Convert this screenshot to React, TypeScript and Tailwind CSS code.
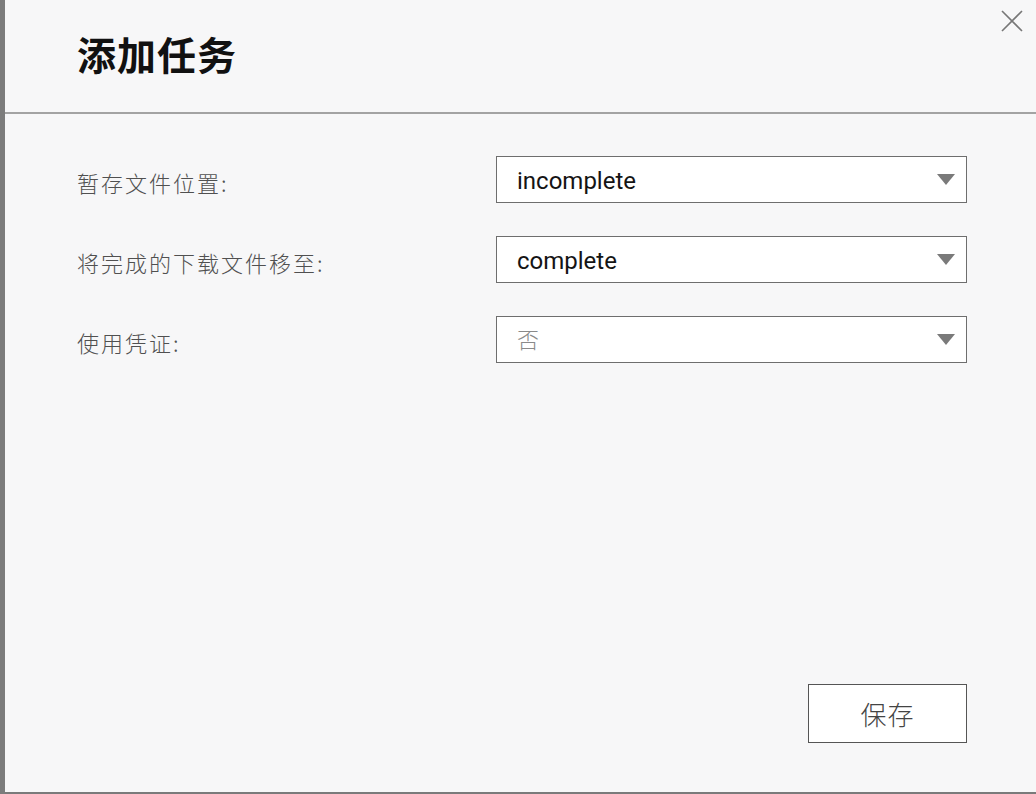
const font = "font-['Roboto','Noto_Sans_CJK_SC',sans-serif]";

const rows = [
  { label: "暂存文件位置:", value: "incomplete", muted: false },
  { label: "将完成的下载文件移至:", value: "complete", muted: false },
  { label: "使用凭证:", value: "否", muted: true },
];

function Caret() {
  return (
    <svg width="18" height="11" viewBox="0 0 18 11" className="shrink-0">
      <path d="M0 0 H18 L9 11 Z" fill="#7a7a7a" />
    </svg>
  );
}

function SelectBox({ value, muted }: { value: string; muted: boolean }) {
  return (
    <div className="w-[471px] h-[47px] bg-white border-[1.5px] border-[#6e6e6e] flex items-center justify-between pl-[20px] pr-[11px]">
      <span
        className={
          muted
            ? "text-[22px] text-[#8a8a8a] font-light pt-[2px]"
            : "text-[24px] text-[#141414] pt-[2px]"
        }
      >
        {value}
      </span>
      <Caret />
    </div>
  );
}

export default function App() {
  return (
    <div className={`w-[1036px] h-[794px] flex bg-[#7c7c7c] ${font}`}>
      <div className="w-[5px] shrink-0" />
      <div className="flex-1 flex flex-col bg-[#f7f7f8] border-b-2 border-[#7a7a7a] relative">
        {/* header */}
        <div className="h-[114px] shrink-0 border-b-2 border-[#a3a3a3] flex items-center pl-[72px] pb-[5px]">
          <h1 className="text-[39px] font-bold text-[#111] tracking-[1px] font-['Noto_Sans_CJK_SC',sans-serif]">
            添加任务
          </h1>
        </div>
        <button className="absolute top-[10px] right-[13px] w-[22px] h-[22px]">
          <svg width="22" height="22" viewBox="0 0 22 22">
            <path
              d="M1 1 L21 21 M21 1 L1 21"
              stroke="#777"
              strokeWidth="1.6"
              fill="none"
            />
          </svg>
        </button>

        {/* form */}
        <div className="flex flex-col gap-[33px] pt-[42px] pl-[72px]">
          {rows.map((r) => (
            <div key={r.label} className="flex items-center">
              <div className="w-[419px] pt-[6px] text-[22px] text-[#505050] tracking-[2px] font-['Noto_Sans_CJK_SC',sans-serif] font-light">
                {r.label}
              </div>
              <SelectBox value={r.value} muted={r.muted} />
            </div>
          ))}
        </div>

        <div className="flex-1" />

        {/* footer */}
        <div className="flex justify-end pr-[69px] pb-[49px]">
          <button className="w-[159px] h-[59px] bg-white border-[1.5px] border-[#555] text-[26px] text-[#444] font-light tracking-[1px] font-['Noto_Sans_CJK_SC',sans-serif]">
            保存
          </button>
        </div>
      </div>
    </div>
  );
}
